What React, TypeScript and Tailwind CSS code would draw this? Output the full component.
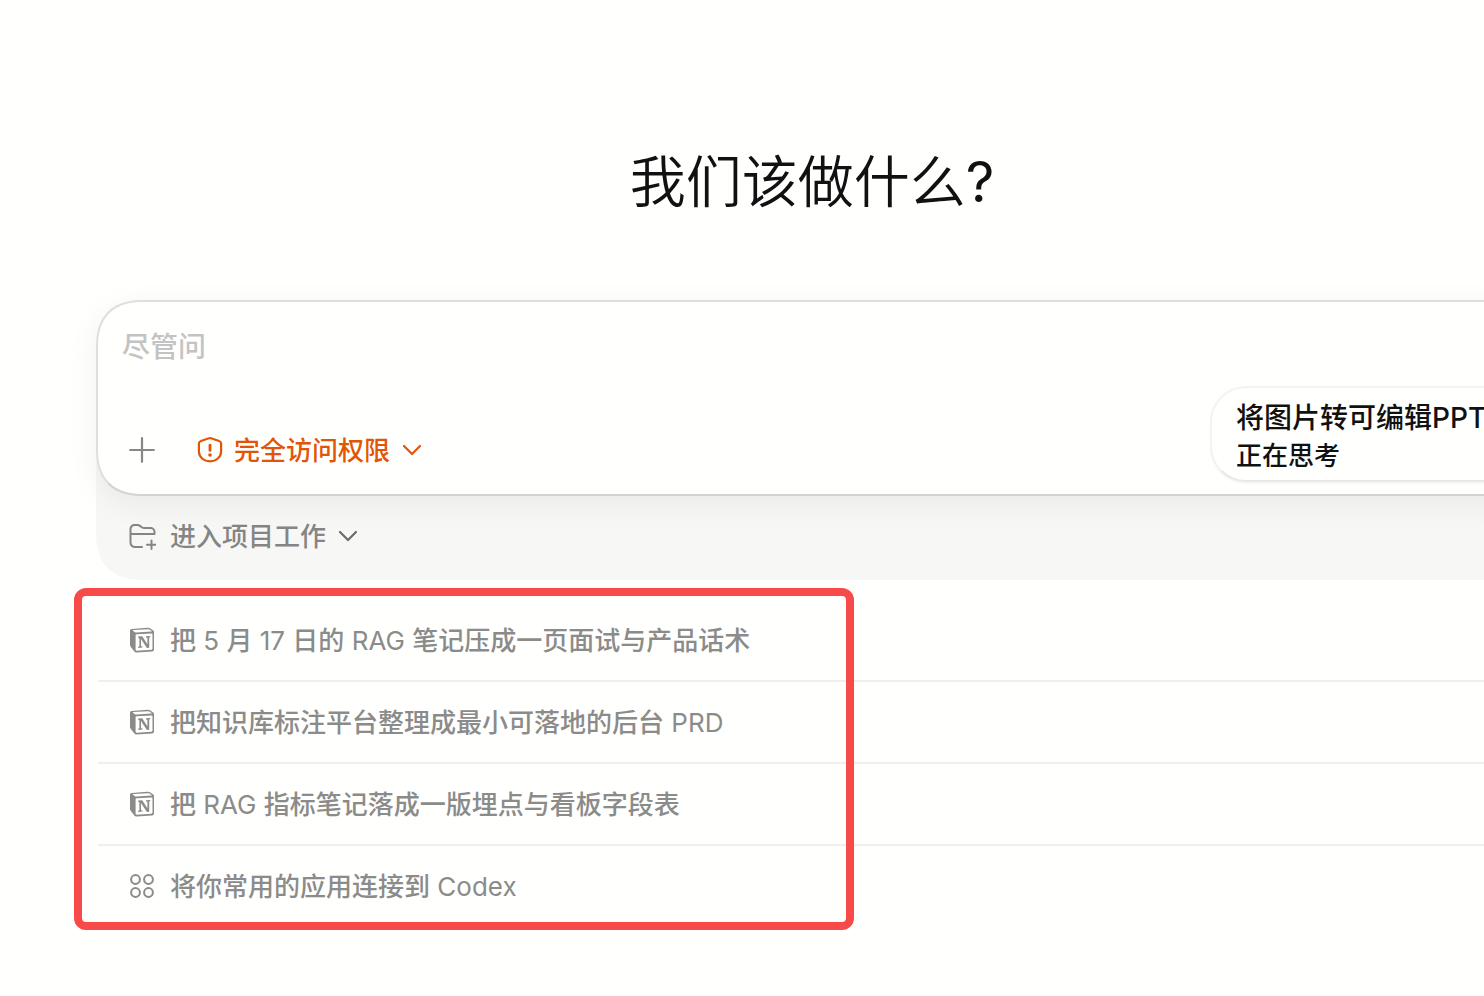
import React from "react";

type IconProps = { className?: string };

function PlusIcon({ className }: IconProps) {
  return (
    <svg viewBox="0 0 28 28" className={className} fill="none" stroke="currentColor" strokeWidth="2.2" strokeLinecap="round" aria-hidden="true">
      <path d="M14 2.200v23.600M2.200 14h23.600" />
    </svg>
  );
}

function ShieldIcon({ className }: IconProps) {
  return (
    <svg viewBox="0 0 28 28" className={className} fill="none" stroke="currentColor" strokeWidth="2.2" strokeLinecap="round" strokeLinejoin="round" aria-hidden="true">
      <path d="M12.900 2.300a3 3 0 0 1 2.200 0l8 2.700c1.300.45 2 1.300 2 2.600v7.700c0 5.900-4.900 10-11.100 10S2.900 21.200 2.900 15.300V7.600c0-1.300.7-2.150 2-2.600z" />
      <path d="M14 9.200v5.200" strokeWidth="2.8" />
      <circle cx="14" cy="19" r="1.800" fill="currentColor" stroke="none" />
    </svg>
  );
}

function ChevronIcon({ className }: IconProps) {
  return (
    <svg viewBox="0 0 20 12" className={className} fill="none" stroke="currentColor" strokeWidth="2.2" strokeLinecap="round" strokeLinejoin="round" aria-hidden="true">
      <path d="M2 2l8 8 8-8" />
    </svg>
  );
}

function FolderPlusIcon({ className }: IconProps) {
  return (
    <svg viewBox="0 0 28 28" className={className} fill="none" stroke="currentColor" strokeWidth="2" strokeLinecap="round" strokeLinejoin="round" aria-hidden="true">
      <path d="M14 25H7a4.500 4.500 0 0 1-4.500-4.500V7a4 4 0 0 1 4-4h2.700c1.200 0 2.200.4 3.100 1.100l1.400 1.100c.8.600 1.700.9 2.700.9H22.500a4 4 0 0 1 4 4v1.800h-24" />
      <path d="M23.500 18.500v8.500M19 22.800h9" />
    </svg>
  );
}

function NotionIcon({ className }: IconProps) {
  return (
    <svg viewBox="0 0 24 26" className={className} fill="currentColor" aria-hidden="true">
      <path
        fillRule="evenodd"
        d="M1.600 1.900 17.400.7c1.200-.1 1.700 0 2.600.6l3.200 2.200c.6.400.8.700.8 1.400v17.700c0 1.200-.5 1.800-1.800 1.900L6.600 25.400c-1 .1-1.600-.2-2.200-1L1 20.200c-.7-.9-1-1.500-1-2.400V3.500c0-.9.500-1.500 1.600-1.600zM3.300 3.100c-.7.1-.8.3-.3.7l1.900 1.400c.5.4.9.4 1.700.4l14.800-1c.6 0 .6-.2.2-.5l-2.200-1.500c-.5-.4-.9-.4-1.500-.4zM6.700 7.200c-.8.100-1.100.5-1.100 1.200v14.200c0 .8.400 1.100 1.200 1.100l14.600-.9c.8 0 1.100-.5 1.100-1.200V7.400c0-.7-.3-1.100-1-1z"
      />
      <path d="M8.200 9.500l4-.3 5.200 8V10.800l-1.400-.3V9.200l4.300-.3v1.200l-1.100.4v10.300l-2.300.2-5.900-9v7.200l1.500.3v1.100l-4.300.3v-1.200l1.200-.4v-8l-1.200-.2z" />
    </svg>
  );
}

function AppsIcon({ className }: IconProps) {
  return (
    <svg viewBox="0 0 24 24" className={className} fill="none" stroke="currentColor" strokeWidth="2" aria-hidden="true">
      <circle cx="5.500" cy="5.500" r="4.400" />
      <circle cx="18.500" cy="5.500" r="4.400" />
      <circle cx="5.500" cy="18.500" r="4.400" />
      <circle cx="18.500" cy="18.500" r="4.400" />
    </svg>
  );
}

const suggestions = [
  { text: "把 5 月 17 日的 RAG 笔记压成一页面试与产品话术", Icon: NotionIcon },
  { text: "把知识库标注平台整理成最小可落地的后台 PRD", Icon: NotionIcon },
  { text: "把 RAG 指标笔记落成一版埋点与看板字段表", Icon: NotionIcon },
  { text: "将你常用的应用连接到 Codex", Icon: AppsIcon },
];

function Composer() {
  return (
    <section className="rounded-[48px] bg-[#f7f7f6] [corner-shape:superellipse(1.3)]">
      <form className="relative flex flex-col rounded-[48px] border-2 border-[#dfdfde] border-b-[#d3d3d3] bg-[#fffffe] px-6 pt-[25px] pb-5 shadow-[0_8px_32px_rgba(0,0,0,0.06)] [corner-shape:superellipse(1.3)]">
        <textarea
          rows={1}
          aria-label="尽管问"
          placeholder="尽管问"
          className="h-[79px] w-full resize-none bg-transparent text-[28px] leading-10 text-[#111] outline-none placeholder:text-[#c3c3c3]"
        />
        <div className="mt-5 flex h-12 items-center pl-1.5">
          <button type="button" aria-label="添加" className="text-[#878786]">
            <PlusIcon className="size-7" />
          </button>
          <button type="button" className="ml-10 flex items-center text-[26px] leading-10 text-[#e25507]">
            <ShieldIcon className="size-7" />
            <span className="ml-2.5 pt-0.5">完全访问权限</span>
            <ChevronIcon className="ml-3 h-3 w-5" />
          </button>
        </div>
      </form>
      <div className="flex h-[84px] items-center pb-1 pl-8">
        <button type="button" className="flex items-center text-[26px] leading-10 text-[#858584]">
          <FolderPlusIcon className="size-7" />
          <span className="ml-3.5 pt-0.5">进入项目工作</span>
          <ChevronIcon className="ml-3 h-3 w-5 text-[#6b6b6a]" />
        </button>
      </div>
    </section>
  );
}

function Suggestions() {
  return (
    <section className="relative mt-5">
      <ul className="ml-0.5">
        {suggestions.map(({ text, Icon }) => (
          <li key={text} className="border-b-2 border-[#efefee] last:border-transparent">
            <button type="button" className="flex h-20 w-full items-center gap-4 pl-8 text-left text-[26px] leading-10 text-[#8b8b8a]">
              <Icon className="h-[26px] w-6 shrink-0" />
              <span className="pt-0.5 whitespace-nowrap">{text}</span>
            </button>
          </li>
        ))}
      </ul>
      <div className="pointer-events-none absolute -top-3 -left-[22px] h-[342px] w-[780px] rounded-xl border-8 border-[#f84a49]" />
    </section>
  );
}

function StatusToast() {
  return (
    <aside className="absolute top-[386px] -right-11 w-[318px] rounded-[36px] border-2 border-[#f3f3f2] border-b-[#e8e8e8] bg-[#fffffe] px-6 pt-2.5 pb-1.5 whitespace-nowrap text-[#111] shadow-[0_2px_2px_rgba(0,0,0,0.04)]">
      <p className="font-['Inter','Noto_Sans_CJK_SC',sans-serif] text-[28px] leading-10 font-medium">将图片转可编辑PPT</p>
      <p className="text-[26px] leading-9">正在思考</p>
    </aside>
  );
}

export default function App() {
  return (
    <div className="relative min-h-screen overflow-hidden bg-[#fffffe] font-['Inter','Noto_Sans_CJK_SC_Medium','Noto_Sans_CJK_SC',sans-serif]">
      <main className="-mr-11 pt-36 pb-16 pl-24">
        <h1 className="text-center font-['Inter','Noto_Sans_CJK_SC_DemiLight','Noto_Sans_CJK_SC',sans-serif] text-[56px] leading-[76px] font-normal text-[#111]">我们该做什么?</h1>
        <div className="mt-20">
          <Composer />
          <Suggestions />
        </div>
      </main>
      <StatusToast />
    </div>
  );
}
